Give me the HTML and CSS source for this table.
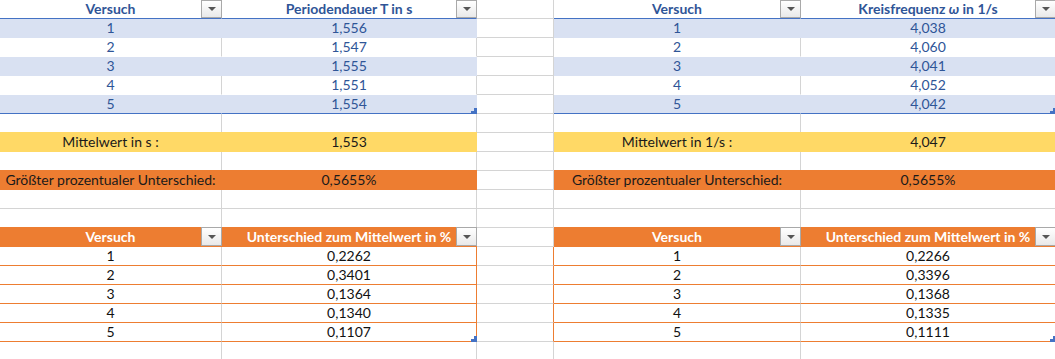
FILE: index.html
```html
<!DOCTYPE html>
<html lang="de">
<head>
<meta charset="utf-8">
<title>Versuch</title>
<link rel="stylesheet" href="styles.css">
</head>
<body>
<div class="sheet">
  <!-- row 0 -->
  <div class="cell th-blue">Versuch<span class="btn"></span></div>
  <div class="cell th-blue">Periodendauer T in s<span class="btn"></span></div>
  <div class="cell"></div>
  <div class="cell th-blue">Versuch<span class="btn"></span></div>
  <div class="cell th-blue">Kreisfrequenz <span class="omega">ω</span> in 1/s<span class="btn"></span></div>
  <!-- row 1 -->
  <div class="cell band">1</div>
  <div class="cell band">1,556</div>
  <div class="cell"></div>
  <div class="cell band">1</div>
  <div class="cell band">4,038</div>
  <!-- row 2 -->
  <div class="cell wrow">2</div>
  <div class="cell wrow">1,547</div>
  <div class="cell"></div>
  <div class="cell wrow">2</div>
  <div class="cell wrow">4,060</div>
  <!-- row 3 -->
  <div class="cell band">3</div>
  <div class="cell band">1,555</div>
  <div class="cell"></div>
  <div class="cell band">3</div>
  <div class="cell band">4,041</div>
  <!-- row 4 -->
  <div class="cell wrow">4</div>
  <div class="cell wrow">1,551</div>
  <div class="cell"></div>
  <div class="cell wrow">4</div>
  <div class="cell wrow">4,052</div>
  <!-- row 5 -->
  <div class="cell band last">5</div>
  <div class="cell band last">1,554<span class="handle"></span></div>
  <div class="cell"></div>
  <div class="cell band last">5</div>
  <div class="cell band last">4,042<span class="handle"></span></div>
  <!-- row 6 -->
  <div class="cell"></div><div class="cell"></div><div class="cell"></div><div class="cell"></div><div class="cell"></div>
  <!-- row 7 -->
  <div class="cell yellow">Mittelwert in s :</div>
  <div class="cell yellow">1,553</div>
  <div class="cell"></div>
  <div class="cell yellow">Mittelwert in 1/s :</div>
  <div class="cell yellow">4,047</div>
  <!-- row 8 -->
  <div class="cell"></div><div class="cell"></div><div class="cell"></div><div class="cell"></div><div class="cell"></div>
  <!-- row 9 -->
  <div class="cell orange">Größter prozentualer Unterschied:</div>
  <div class="cell orange">0,5655%</div>
  <div class="cell"></div>
  <div class="cell orange">Größter prozentualer Unterschied:</div>
  <div class="cell orange">0,5655%</div>
  <!-- row 10 -->
  <div class="cell"></div><div class="cell"></div><div class="cell"></div><div class="cell"></div><div class="cell"></div>
  <!-- row 11 -->
  <div class="cell"></div><div class="cell"></div><div class="cell"></div><div class="cell"></div><div class="cell"></div>
  <!-- row 12 -->
  <div class="cell th-orange">Versuch<span class="btn low"></span></div>
  <div class="cell th-orange">Unterschied zum Mittelwert in %<span class="btn low"></span></div>
  <div class="cell"></div>
  <div class="cell th-orange">Versuch<span class="btn low"></span></div>
  <div class="cell th-orange">Unterschied zum Mittelwert in %<span class="btn low"></span></div>
  <!-- row 13 -->
  <div class="cell orow">1</div>
  <div class="cell orow oend">0,2262</div>
  <div class="cell oend"></div>
  <div class="cell orow">1</div>
  <div class="cell orow">0,2266</div>
  <!-- row 14 -->
  <div class="cell orow">2</div>
  <div class="cell orow oend">0,3401</div>
  <div class="cell oend"></div>
  <div class="cell orow">2</div>
  <div class="cell orow">0,3396</div>
  <!-- row 15 -->
  <div class="cell orow">3</div>
  <div class="cell orow oend">0,1364</div>
  <div class="cell oend"></div>
  <div class="cell orow">3</div>
  <div class="cell orow">0,1368</div>
  <!-- row 16 -->
  <div class="cell orow">4</div>
  <div class="cell orow oend">0,1340</div>
  <div class="cell oend"></div>
  <div class="cell orow">4</div>
  <div class="cell orow">0,1335</div>
  <!-- row 17 -->
  <div class="cell orow">5</div>
  <div class="cell orow oend">0,1107<span class="handle"></span></div>
  <div class="cell oend"></div>
  <div class="cell orow">5</div>
  <div class="cell orow">0,1111<span class="handle"></span></div>
  <!-- row 18 -->
  <div class="cell"></div><div class="cell"></div><div class="cell"></div><div class="cell"></div><div class="cell"></div>
</div>
</body>
</html>
```
FILE: styles.css
```css
html, body {
  margin: 0;
  padding: 0;
  background: #ffffff;
  overflow: hidden;
}

.sheet {
  display: grid;
  grid-template-columns: 222px 255px 77px 247px 255px;
  grid-auto-rows: 19px;
  width: 1056px;
  font-family: Lato, "Liberation Sans", sans-serif;
  font-size: 14px;
  color: #1a1a1a;
}

.cell {
  position: relative;
  box-sizing: border-box;
  border-right: 1px solid #d4d4d4;
  border-bottom: 1px solid #d4d4d4;
  text-align: center;
  line-height: 18px;
  white-space: nowrap;
}

.th-blue {
  color: #2f5597;
  font-weight: 700;
  border-bottom-color: #4472c4;
}

.omega {
  font-style: italic;
}

.band {
  background: #d9e1f2;
  border-color: #d9e1f2;
  color: #2f5597;
}

.band.last {
  border-bottom-color: #4472c4;
}

.wrow {
  color: #2f5597;
  border-bottom-color: #ffffff;
}

.yellow {
  background: #ffd966;
  border-color: #ffd966;
  box-shadow: 0 -1px 0 #ffd966;
}

.orange {
  background: #ed7d31;
  border-color: #ed7d31;
  box-shadow: 0 -1px 0 #ed7d31;
}

.th-orange {
  background: #ed7d31;
  border-color: #ed7d31;
  box-shadow: 0 -1px 0 #ed7d31;
  color: #ffffff;
  font-weight: 700;
}

.orow {
  color: #111111;
  border-bottom-color: #ed7d31;
}

.oend {
  border-right-color: #ed7d31;
}

.btn {
  position: absolute;
  right: -1px;
  top: 0;
  width: 21px;
  height: 18px;
  box-sizing: border-box;
  border: 1px solid #a9a9a9;
  background: linear-gradient(#ffffff, #e9e9e9);
}

.btn.low {
  top: -1px;
  height: 19px;
}

.btn::after {
  content: "";
  position: absolute;
  left: 6px;
  top: 6px;
  border-left: 4px solid transparent;
  border-right: 4px solid transparent;
  border-top: 4px solid #555555;
}

.btn.low::after {
  top: 7px;
}

.handle {
  position: absolute;
  right: -1px;
  bottom: -1px;
  width: 6px;
  height: 6px;
  background: #4472c4;
  clip-path: polygon(0 50%, 50% 50%, 50% 0, 100% 0, 100% 100%, 0 100%);
}
```
